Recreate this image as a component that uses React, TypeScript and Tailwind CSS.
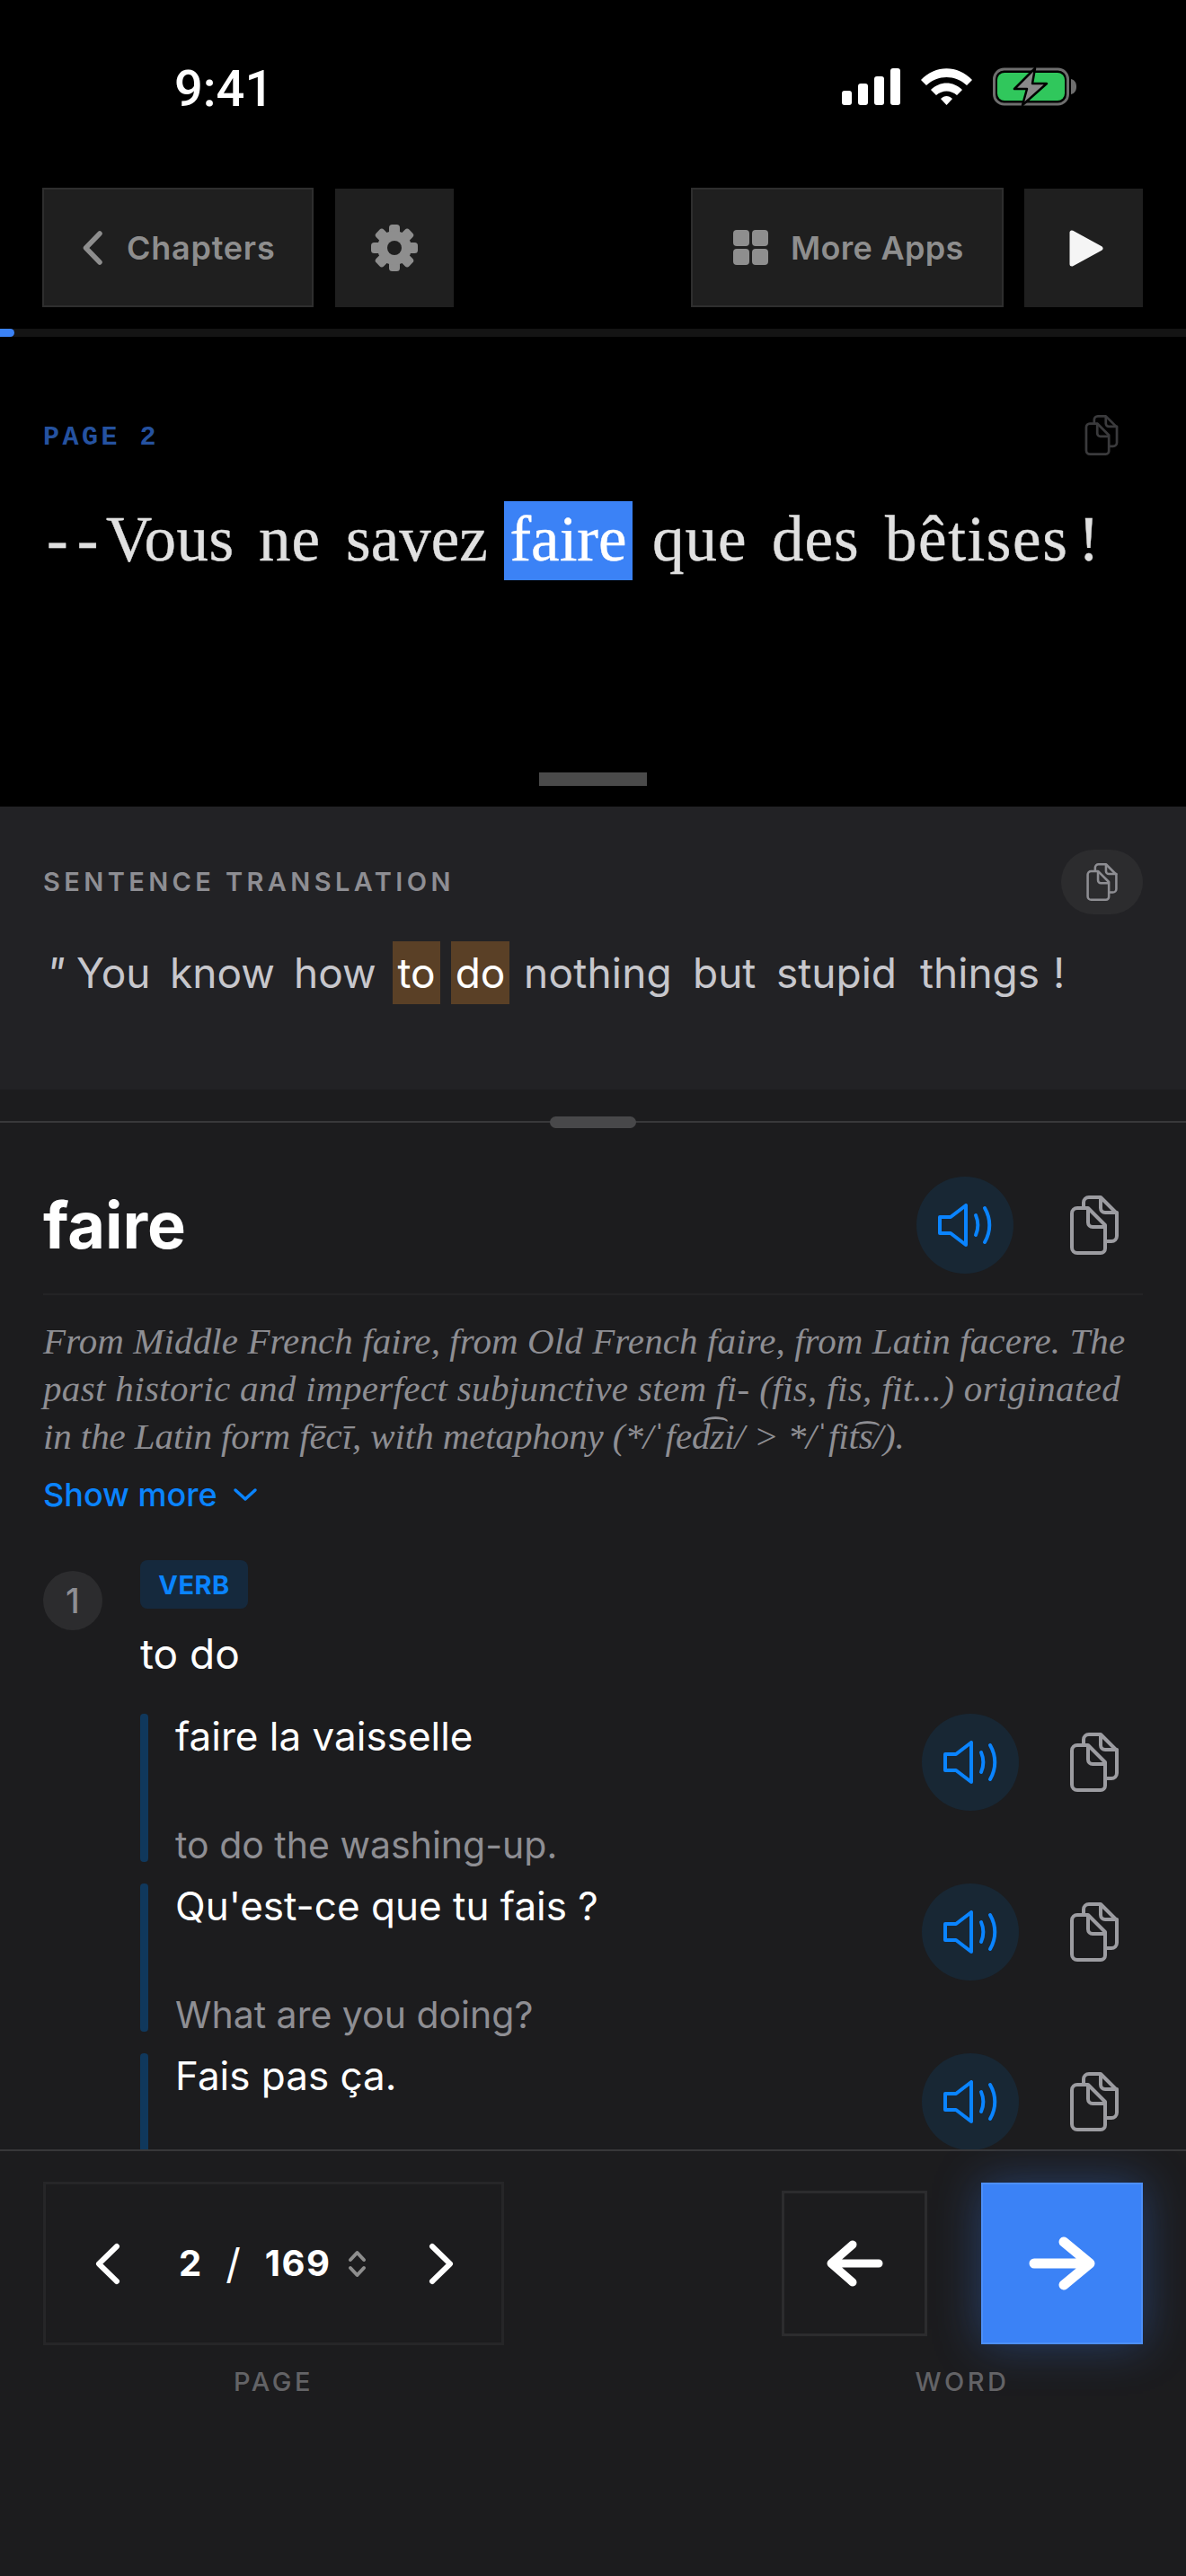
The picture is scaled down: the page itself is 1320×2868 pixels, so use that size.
import React from "react";

const sans = "font-['Inter','Liberation_Sans',sans-serif]";

function CopyIcon({ className = "" }: { className?: string }) {
  return (
    <svg viewBox="0 0 54 66" fill="none" stroke="currentColor" strokeWidth="4" strokeLinejoin="round" strokeLinecap="round" className={className}>
      <path d="M15 12V8a6 6 0 0 1 6-6h13l18 18v25a6 6 0 0 1-6 6h-5" />
      <path d="M34 3v11a5 5 0 0 0 5 5h13" />
      <path d="M2 20a6 6 0 0 1 6-6h12l19 19v26a5 5 0 0 1-5 5H8a6 6 0 0 1-6-6z" />
      <path d="M20 15v15a5 5 0 0 0 5 5h13" />
    </svg>
  );
}

function SpeakerIcon({ className = "" }: { className?: string }) {
  return (
    <svg viewBox="0 0 60 48" fill="none" stroke="currentColor" strokeWidth="4" strokeLinejoin="round" strokeLinecap="round" className={className}>
      <path d="M31 2v44L14 33H2V15h12z" />
      <path d="M42 13c3 7 3 15 0 22" />
      <path d="M52 5c7 12 7 26 0 38" />
    </svg>
  );
}

function SoundCopy({ gap }: { gap: string }) {
  return (
    <div className={`mr-[27px] flex h-[108px] shrink-0 items-center self-start ${gap}`}>
      <div className="flex h-[108px] w-[108px] items-center justify-center rounded-full bg-[#182734]">
        <SpeakerIcon className="h-[48px] w-[60px] text-[#0a84ff]" />
      </div>
      <CopyIcon className="h-[66px] w-[54px] text-[#9c9ca1]" />
    </div>
  );
}

function Example({ fr, en }: { fr: string; en?: string }) {
  return (
    <div className="flex h-[165px] shrink-0 justify-between">
      <div className="flex gap-[30px]">
        <div className="w-[9px] rounded-[4px] bg-[#10385c]" />
        <div className="mt-[1px] flex flex-col">
          <div className="text-[44px] leading-[48px] text-white">{fr}</div>
          {en && <div className="mt-[73px] text-[41px] leading-[48px] text-[#8e8e93]">{en}</div>}
        </div>
      </div>
      <SoundCopy gap="gap-[57px]" />
    </div>
  );
}

const teeth = [0, 45, 90, 135, 180, 225, 270, 315];

export default function App() {
  return (
    <div className={`${sans} flex h-[2868px] w-[1320px] flex-col overflow-hidden bg-black`}>
      {/* status bar */}
      <div className="flex h-[209px] shrink-0 items-start justify-between pl-[194px] pr-[122px] pt-[67px]">
        <span className="font-['Roboto',sans-serif] text-[56px] font-medium leading-[64px] text-white">9:41</span>
        <div className="mt-[8px] flex items-center gap-[23px]">
          <svg viewBox="0 0 65 41" className="h-[41px] w-[65px]" fill="#fff">
            <rect x="0" y="25" width="11" height="16" rx="3" />
            <rect x="18" y="17" width="11" height="24" rx="3" />
            <rect x="36" y="9" width="11" height="32" rx="3" />
            <rect x="54" y="0" width="11" height="41" rx="3" />
          </svg>
          <svg viewBox="0 0 57 41" className="h-[41px] w-[57px]" fill="#fff">
            <path d="M0 13C16-4 41-4 57 13l-6 6C38 7 19 7 6 19z" />
            <path d="M11 24c10-10 25-10 35 0l-6 6c-7-6-16-6-23 0z" />
            <path d="M22 34c4-4 9-4 13 0l-6.500 7z" />
          </svg>
          <svg viewBox="0 0 93 43" className="h-[43px] w-[93px]">
            <rect x="1.500" y="2" width="82" height="39" rx="11" fill="none" stroke="#6e6e6e" strokeWidth="3" />
            <rect x="5" y="6" width="75" height="31" rx="8" fill="#30c75c" />
            <path d="M87 13c4 1 6 4 6 8.500s-2 7.500-6 8.500z" fill="#6e6e6e" />
            <path d="M47 1 24 24h14l-5 18 27-24H44z" fill="#8a8a8a" stroke="#000" strokeWidth="2.500" strokeLinejoin="round" />
          </svg>
        </div>
      </div>

      {/* toolbar */}
      <div className="flex h-[133px] shrink-0 justify-between pl-[47px] pr-[48px]">
        <div className="flex gap-[24px]">
          <div className="flex h-[133px] w-[302px] items-center gap-[27px] border-2 border-[#2e2e2e] bg-[#1f1f1f] pl-[43px]">
            <svg viewBox="0 0 22 38" className="h-[38px] w-[22px]" fill="none" stroke="#8e8e8e" strokeWidth="5.500" strokeLinecap="round" strokeLinejoin="round">
              <path d="M19 3 3.500 19 19 35" />
            </svg>
            <span className="text-[36px] font-semibold leading-none tracking-[0.75px] text-[#8e8e8e]">Chapters</span>
          </div>
          <div className="mt-[1px] flex h-[132px] w-[132px] items-center justify-center bg-[#1f1f1f]">
            <svg viewBox="-26 -26 52 52" className="h-[52px] w-[52px]" fill="#8e8e8e">
              {teeth.map((a) => (
                <rect key={a} x="-6" y="-26" width="12" height="14" rx="3.500" transform={`rotate(${a})`} />
              ))}
              <circle r="19" />
              <circle r="8" fill="#1f1f1f" />
            </svg>
          </div>
        </div>
        <div className="flex gap-[23px]">
          <div className="flex h-[133px] w-[348px] items-center gap-[25px] border-2 border-[#2e2e2e] bg-[#1f1f1f] pl-[45px]">
            <svg viewBox="0 0 39 39" className="h-[39px] w-[39px]" fill="#8e8e8e">
              <rect x="0" y="0" width="18" height="18" rx="4" />
              <rect x="21" y="0" width="18" height="18" rx="4" />
              <rect x="0" y="21" width="18" height="18" rx="4" />
              <rect x="21" y="21" width="18" height="18" rx="4" />
            </svg>
            <span className="text-[36px] font-semibold leading-none tracking-[0.3px] text-[#8e8e8e]">More Apps</span>
          </div>
          <div className="mt-[1px] flex h-[132px] w-[132px] items-center justify-center bg-[#1f1f1f]">
            <svg viewBox="0 0 38 41" className="ml-[6px] h-[41px] w-[38px]" fill="#f5f5f5" stroke="#f5f5f5" strokeWidth="5" strokeLinejoin="round">
              <path d="M3 3v35l32-17.500z" />
            </svg>
          </div>
        </div>
      </div>

      {/* progress */}
      <div className="mt-[24px] h-[9px] w-full shrink-0 bg-[#141414]">
        <div className="h-[9px] w-[16px] rounded-r-full bg-[#3b82f6]" />
      </div>

      {/* sentence */}
      <div className="relative flex h-[523px] shrink-0 flex-col px-[48px] pt-[87px]">
        <div className="flex h-[45px] items-center justify-between">
          <span className="relative top-[3px] whitespace-pre font-['Liberation_Mono',monospace] text-[30px] font-bold tracking-[3.5px] text-[#2552a0]">PAGE 2</span>
          <CopyIcon className="mr-[27px] h-[45px] w-[38px] text-[#3a3a3c]" />
        </div>
        <div className="mt-[51px] flex h-[88px] items-start whitespace-pre font-['Liberation_Serif',serif] text-[71px] leading-[84px] text-[#e0e0e0] [-webkit-text-stroke:0.4px]">
          <span className="ml-[4px] w-[66px] tracking-[10px]">--</span>
          <span className="w-[170px] tracking-[0.5px]">Vous</span>
          <span className="w-[97px] tracking-[1px]">ne</span>
          <span className="w-[176px]">savez</span>
          <span className="h-[88px] w-[143px] bg-[#3b82f6] text-center text-white">faire</span>
          <span className="ml-[22px] w-[133px] tracking-[1px]">que</span>
          <span className="w-[126px] tracking-[1px]">des</span>
          <span className="w-[215px] tracking-[1.6px]">bêtises</span>
          <span>!</span>
        </div>
        <div className="absolute bottom-[23px] left-[600px] h-[15px] w-[120px] bg-[#4a4a4a]" />
      </div>

      {/* translation */}
      <div className="flex h-[315px] shrink-0 flex-col bg-[#222225] px-[48px] pt-[48px]">
        <div className="flex h-[72px] items-center justify-between">
          <span className="text-[29px] font-semibold tracking-[4.4px] text-[#8e8e93]">SENTENCE TRANSLATION</span>
          <div className="flex h-[72px] w-[91px] items-center justify-center rounded-[36px] bg-[#2c2c2e]">
            <CopyIcon className="h-[42px] w-[35px] text-[#8e8e93]" />
          </div>
        </div>
        <div className="mt-[30px] flex h-[70px] items-start whitespace-pre text-[46px] leading-[70px] text-[#c7c7cc]">
          <span className="ml-[3px] w-[34px] italic">"</span>
          <span className="w-[104px]">You</span>
          <span className="w-[138px]">know</span>
          <span className="w-[110px]">how</span>
          <span className="h-[70px] w-[53px] bg-[#5a4026] text-center text-white">to</span>
          <span className="ml-[12px] h-[70px] w-[65px] bg-[#5a4026] text-center text-white">do</span>
          <span className="ml-[16px] w-[188px] tracking-[0.2px]">nothing</span>
          <span className="w-[93px]">but</span>
          <span className="w-[160px]">stupid</span>
          <span className="w-[148px]">things</span>
          <span>!</span>
        </div>
      </div>

      {/* dictionary */}
      <div className="relative flex h-[1180px] shrink-0 flex-col overflow-hidden bg-[#1c1c1e]">
        <div className="h-[37px] shrink-0 border-b-2 border-[#38383a]" />
        <div className="absolute left-[612px] top-[30px] h-[13px] w-[96px] rounded-full bg-[#48484a]" />
        <div className="flex flex-col px-[48px]">
          <div className="flex h-[192px] shrink-0 items-start justify-between border-b-2 border-[#232325] pt-[60px]">
            <span className="mt-[18px] text-[72px] font-bold leading-[72px] text-white">faire</span>
            <SoundCopy gap="gap-[63px]" />
          </div>
          <div className="mt-[25px] shrink-0 font-['Liberation_Serif',serif] text-[41px] italic leading-[53px] text-[#8e8e93]">
            <div className="whitespace-nowrap tracking-[0.1px]">From Middle French faire, from Old French faire, from Latin facere. The</div>
            <div className="whitespace-nowrap tracking-[0.35px]">past historic and imperfect subjunctive stem fi- (fis, fis, fit...) originated</div>
            <div className="whitespace-nowrap tracking-[-0.1px]">in the Latin form fēcī, with metaphony (*/ˈfed͡zi/ &gt; */ˈfit͡s/).</div>
          </div>
          <div className="mt-[14px] flex shrink-0 items-center gap-[17px] text-[36px] font-medium leading-[48px] text-[#0a84ff]">
            <span>Show more</span>
            <svg viewBox="0 0 28 16" className="h-[16px] w-[28px]" fill="none" stroke="currentColor" strokeWidth="3.500" strokeLinecap="round" strokeLinejoin="round">
              <path d="M3 3l11 10L25 3" />
            </svg>
          </div>
          <div className="mt-[49px] flex shrink-0 gap-[42px]">
            <div className="mt-[12px] flex h-[66px] w-[66px] shrink-0 items-center justify-center rounded-full bg-[#2c2c2e] text-[38px] font-medium text-[#8e8e93]">1</div>
            <div className="flex min-w-0 flex-1 flex-col">
              <div className="flex h-[54px] w-[120px] items-center justify-center rounded-[8px] bg-[#15293d] pt-[2px] text-[29px] font-bold tracking-[0.5px] text-[#0a84ff]">VERB</div>
              <div className="mt-[22px] text-[46px] leading-[56px] text-white">to do</div>
              <div className="mt-[39px] flex flex-col gap-[24px]">
                <Example fr="faire la vaisselle" en="to do the washing-up." />
                <Example fr="Qu'est-ce que tu fais ?" en="What are you doing?" />
                <Example fr="Fais pas ça." />
              </div>
            </div>
          </div>
        </div>
      </div>

      {/* bottom bar */}
      <div className="flex h-[475px] shrink-0 items-start justify-between border-t-2 border-[#38383a] bg-[#1c1c1e] px-[48px] pt-[34px]">
        <div className="flex flex-col items-center">
          <div className="flex h-[182px] w-[513px] items-center border-[3px] border-[#262628] pl-[54px]">
            <svg viewBox="0 0 29 47" className="h-[47px] w-[29px]" fill="none" stroke="#fff" strokeWidth="6" strokeLinecap="round" strokeLinejoin="round">
              <path d="M25 4 5 23.500 25 43" />
            </svg>
            <span className="ml-[65px] text-[40px] font-bold leading-none text-white">2</span>
            <span className="ml-[27px] text-[46px] font-normal leading-none text-white">/</span>
            <span className="ml-[27px] text-[40px] font-bold leading-none tracking-[1.5px] text-white">169</span>
            <svg viewBox="0 0 23 31" className="ml-[18px] h-[31px] w-[23px]" fill="none" stroke="#8e8e8e" strokeWidth="4" strokeLinecap="round" strokeLinejoin="round">
              <path d="M4 11l7.500-8L19 11M4 20l7.500 8L19 20" />
            </svg>
            <svg viewBox="0 0 29 47" className="ml-[68px] h-[47px] w-[29px]" fill="none" stroke="#fff" strokeWidth="6" strokeLinecap="round" strokeLinejoin="round">
              <path d="M4 4l20 19.500L4 43" />
            </svg>
          </div>
          <span className="mt-[26px] text-[29px] font-medium leading-[30px] tracking-[3.5px] text-[#636366]">PAGE</span>
        </div>
        <div className="flex flex-col items-center">
          <div className="flex h-[182px] items-center gap-[60px]">
            <div className="flex h-[162px] w-[162px] items-center justify-center border-[3px] border-[#2c2c2e]">
              <svg viewBox="0 0 63 52" className="h-[52px] w-[63px]" fill="none" stroke="#fff" strokeWidth="9" strokeLinecap="round" strokeLinejoin="round">
                <path d="M58 26H6M29 5 5 26l24 21" />
              </svg>
            </div>
            <div className="flex h-[180px] w-[180px] items-center justify-center border-2 border-[#4d8ff7] bg-[#3b82f6] shadow-[0_0_48px_rgba(59,130,246,0.35)]">
              <svg viewBox="0 0 74 60" className="h-[60px] w-[74px]" fill="none" stroke="#fff" strokeWidth="11" strokeLinecap="round" strokeLinejoin="round">
                <path d="M6 30h60M39 6l29 24-29 24" />
              </svg>
            </div>
          </div>
          <span className="mt-[26px] text-[29px] font-medium leading-[30px] tracking-[3.5px] text-[#636366]">WORD</span>
        </div>
      </div>
    </div>
  );
}
